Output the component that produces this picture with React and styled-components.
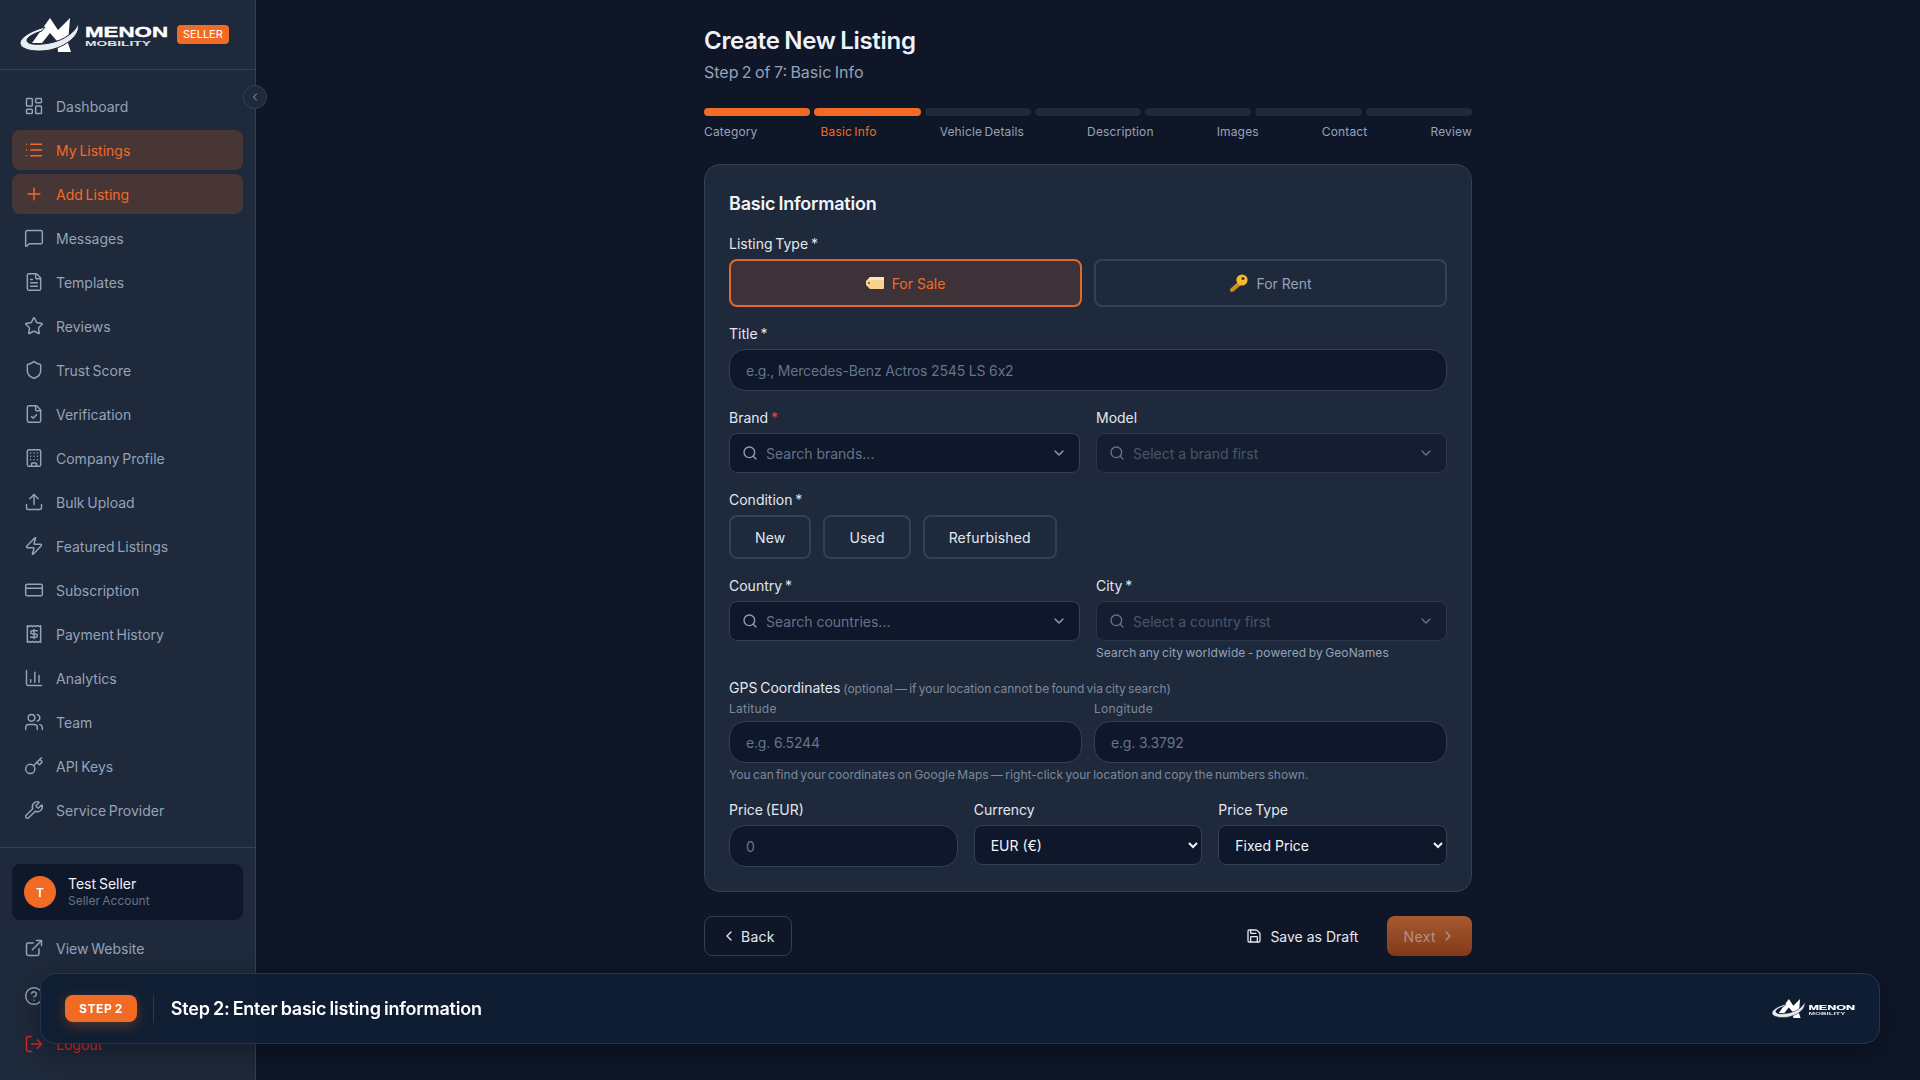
import styled, { createGlobalStyle } from 'styled-components';
import {
  LayoutDashboard, List, Plus, MessageSquare, FileText, Star, Shield, FileCheck, Building,
  Upload, Zap, CreditCard, Receipt, ChartColumn, Users, Key, Wrench, ExternalLink, CircleHelp,
  LogOut, Search, ChevronDown, ChevronLeft, ChevronRight, Save,
} from 'lucide-react';

const ACCENT = '#f26b25';

const NAV_ITEMS = [
  { label: 'Dashboard', icon: LayoutDashboard },
  { label: 'My Listings', icon: List, active: true },
  { label: 'Add Listing', icon: Plus, active: true },
  { label: 'Messages', icon: MessageSquare },
  { label: 'Templates', icon: FileText },
  { label: 'Reviews', icon: Star },
  { label: 'Trust Score', icon: Shield },
  { label: 'Verification', icon: FileCheck },
  { label: 'Company Profile', icon: Building },
  { label: 'Bulk Upload', icon: Upload },
  { label: 'Featured Listings', icon: Zap },
  { label: 'Subscription', icon: CreditCard },
  { label: 'Payment History', icon: Receipt },
  { label: 'Analytics', icon: ChartColumn },
  { label: 'Team', icon: Users },
  { label: 'API Keys', icon: Key },
  { label: 'Service Provider', icon: Wrench },
];

const STEPS = ['Category', 'Basic Info', 'Vehicle Details', 'Description', 'Images', 'Contact', 'Review'];

const GlobalStyle = createGlobalStyle`
  * { box-sizing: border-box; }
  html, body { margin: 0; height: 100%; }
  body {
    background: #0e1628;
    color: #f1f5f9;
    font-family: Inter, "Noto Sans", sans-serif;
    font-size: 14px;
    word-spacing: -0.08em;
    overflow: hidden;
  }
  input::placeholder { color: #64748b; opacity: 1; }
`;

const Logo = ({ width, cut }) => (
  <LogoSvg viewBox="0 0 148 34" width={width} height={(width * 34) / 148}>
    <path d="M12 25 30 0l8 12L50 0l-2 25 3 9H38l-1-11-7-8-8 10Z" fill="#fff" />
    <path
      d="M58 6c3 8-7 21-28 26C13 35 0 31 0 25c0-5 10-12 25-16l-3 4C12 16 6 20 7 23c1 4 12 4 23 2C45 22 55 14 58 6Z"
      fill="#e8edf2"
      stroke={cut}
      strokeWidth="1"
    />
    <text x="65" y="19" fontSize="14" fontWeight="700" fill="#fff" stroke="#fff" strokeWidth="0.35" textLength="83" lengthAdjust="spacingAndGlyphs">
      MENON
    </text>
    <text x="65" y="28" fontSize="7.5" fontWeight="700" fill="#dbe2ea" textLength="66" lengthAdjust="spacingAndGlyphs">
      MOBILITY
    </text>
  </LogoSvg>
);

const TagEmoji = () => (
  <svg width="18" height="12" viewBox="0 0 18 12">
    <path d="M4 0h13a1 1 0 0 1 1 1v10a1 1 0 0 1-1 1H4L0 8V4Z" fill="#fbd38d" />
    <path d="M4 0h13a1 1 0 0 1 1 1v2H2Z" fill="#fde6bd" />
    <circle cx="3" cy="6" r="1" fill="#5b4a3a" />
  </svg>
);

const KeyEmoji = () => (
  <svg width="19" height="19" viewBox="0 0 19 19">
    <path d="M10 7 1 15l.5 3 3-.5L13 10Z" fill="#c9901c" />
    <circle cx="13" cy="6" r="5.6" fill="#f2b92c" />
    <circle cx="14" cy="4.6" r="1.5" fill="#3b3320" />
  </svg>
);

const Combo = ({ placeholder, disabled }) => (
  <ComboBox $disabled={disabled}>
    <Search size={16} color="#94a3b8" />
    <ComboInput placeholder={placeholder} disabled={disabled} />
    <ChevronDown size={16} color="#94a3b8" />
  </ComboBox>
);

export default function App() {
  return (
    <Page>
      <GlobalStyle />
      <Sidebar>
        <SideHeader>
          <Logo width={148} cut="#1e293b" />
          <SellerBadge>SELLER</SellerBadge>
        </SideHeader>
        <CollapseBtn>
          <ChevronLeft size={12} />
        </CollapseBtn>
        <Nav>
          {NAV_ITEMS.map(({ label, icon: Icon, active }) => (
            <NavItem key={label} $active={active}>
              <Icon size={20} strokeWidth={1.75} />
              {label}
            </NavItem>
          ))}
        </Nav>
        <SideFooter>
          <UserCard>
            <Avatar>T</Avatar>
            <div>
              <UserName>Test Seller</UserName>
              <UserRole>Seller Account</UserRole>
            </div>
          </UserCard>
          <NavItem>
            <ExternalLink size={20} strokeWidth={1.75} />
            View Website
          </NavItem>
          <NavItem>
            <CircleHelp size={20} strokeWidth={1.75} />
            Report Issue
          </NavItem>
          <NavItem $danger>
            <LogOut size={20} strokeWidth={1.75} />
            Logout
          </NavItem>
        </SideFooter>
      </Sidebar>

      <Main>
        <Content>
          <Title>Create New Listing</Title>
          <Subtitle>Step 2 of 7: Basic Info</Subtitle>

          <Bars>
            {STEPS.map((step, i) => (
              <Bar key={step} $done={i < 2} />
            ))}
          </Bars>
          <StepLabels>
            {STEPS.map((step, i) => (
              <StepLabel key={step} $current={i === 1}>
                {step}
              </StepLabel>
            ))}
          </StepLabels>

          <Card>
            <CardTitle>Basic Information</CardTitle>
            <Form>
              <div>
                <Label>Listing Type *</Label>
                <TwoCols $gap={12}>
                  <TypeBtn $active>
                    <TagEmoji />
                    For Sale
                  </TypeBtn>
                  <TypeBtn>
                    <KeyEmoji />
                    For Rent
                  </TypeBtn>
                </TwoCols>
              </div>

              <div>
                <Label>Title *</Label>
                <Input placeholder="e.g., Mercedes-Benz Actros 2545 LS 6x2" />
              </div>

              <TwoCols $gap={16}>
                <div>
                  <Label>
                    Brand <Req>*</Req>
                  </Label>
                  <Combo placeholder="Search brands..." />
                </div>
                <div>
                  <Label>Model</Label>
                  <Combo placeholder="Select a brand first" disabled />
                </div>
              </TwoCols>

              <div>
                <Label>Condition *</Label>
                <ConditionRow>
                  <ConditionBtn>New</ConditionBtn>
                  <ConditionBtn>Used</ConditionBtn>
                  <ConditionBtn>Refurbished</ConditionBtn>
                </ConditionRow>
              </div>

              <TwoCols $gap={16}>
                <div>
                  <Label>Country *</Label>
                  <Combo placeholder="Search countries..." />
                </div>
                <div>
                  <Label>City *</Label>
                  <Combo placeholder="Select a country first" disabled />
                  <Help>Search any city worldwide - powered by GeoNames</Help>
                </div>
              </TwoCols>

              <div>
                <GpsLabel>
                  GPS Coordinates <small>(optional — if your location cannot be found via city search)</small>
                </GpsLabel>
                <TwoCols $gap={12}>
                  <div>
                    <SubLabel>Latitude</SubLabel>
                    <Input placeholder="e.g. 6.5244" />
                  </div>
                  <div>
                    <SubLabel>Longitude</SubLabel>
                    <Input placeholder="e.g. 3.3792" />
                  </div>
                </TwoCols>
                <Help $dim>You can find your coordinates on Google Maps — right-click your location and copy the numbers shown.</Help>
              </div>

              <ThreeCols>
                <div>
                  <Label>Price (EUR)</Label>
                  <Input placeholder="0" />
                </div>
                <div>
                  <Label>Currency</Label>
                  <Select defaultValue="EUR">
                    <option value="EUR">EUR (€)</option>
                    <option value="USD">USD ($)</option>
                  </Select>
                </div>
                <div>
                  <Label>Price Type</Label>
                  <Select defaultValue="fixed">
                    <option value="fixed">Fixed Price</option>
                    <option value="negotiable">Negotiable</option>
                  </Select>
                </div>
              </ThreeCols>
            </Form>
          </Card>

          <Actions>
            <BackBtn>
              <ChevronLeft size={16} />
              Back
            </BackBtn>
            <ActionsRight>
              <DraftBtn>
                <Save size={16} />
                Save as Draft
              </DraftBtn>
              <NextBtn>
                Next
                <ChevronRight size={16} />
              </NextBtn>
            </ActionsRight>
          </Actions>
        </Content>
      </Main>

      <Toast>
        <StepBadge>STEP 2</StepBadge>
        <ToastDivider />
        <ToastText>Step 2: Enter basic listing information</ToastText>
        <Logo width={83} cut="#0f1f33" />
      </Toast>
    </Page>
  );
}

const Page = styled.div`
  display: flex;
  height: 100vh;
`;

const LogoSvg = styled.svg`
  flex-shrink: 0;
  font-family: "Liberation Sans", Arial, sans-serif;
  word-spacing: 0;
`;

const Sidebar = styled.aside`
  position: relative;
  display: flex;
  flex-direction: column;
  width: 256px;
  flex-shrink: 0;
  background: #1e293b;
  border-right: 1px solid #334155;
`;

const SideHeader = styled.div`
  display: flex;
  align-items: center;
  gap: 9px;
  height: 70px;
  padding: 0 20px;
  border-bottom: 1px solid #334155;
`;

const SellerBadge = styled.span`
  padding: 2px 6px;
  border-radius: 4px;
  background: ${ACCENT};
  color: #fff;
  font-size: 11px;
  font-weight: 400;
  line-height: 15px;
`;

const CollapseBtn = styled.button`
  position: absolute;
  top: 85px;
  right: -12px;
  display: flex;
  align-items: center;
  justify-content: center;
  width: 24px;
  height: 24px;
  padding: 0;
  border: 1px solid #334155;
  border-radius: 50%;
  background: #1e293b;
  color: #94a3b8;
`;

const Nav = styled.nav`
  display: flex;
  flex-direction: column;
  gap: 4px;
  padding: 16px 12px 17px;
  border-bottom: 1px solid #334155;
`;

const NavItem = styled.a`
  display: flex;
  align-items: center;
  gap: 12px;
  height: 40px;
  padding: 0 12px;
  border-radius: 8px;
  background: ${props => (props.$active ? 'rgba(242, 107, 37, 0.2)' : 'transparent')};
  color: ${props => (props.$active ? ACCENT : props.$danger ? '#dc2626' : '#94a3b8')};
  font-size: 14px;
  font-weight: 400;
`;

const SideFooter = styled.div`
  display: flex;
  flex-direction: column;
  gap: 8px;
  padding: 16px 12px;
`;

const UserCard = styled.div`
  display: flex;
  align-items: center;
  gap: 12px;
  height: 56px;
  padding: 0 12px;
  border-radius: 8px;
  background: #0f172a;
`;

const Avatar = styled.div`
  display: flex;
  align-items: center;
  justify-content: center;
  width: 32px;
  height: 32px;
  border-radius: 50%;
  background: ${ACCENT};
  color: #fff;
  font-size: 12px;
  font-weight: 600;
`;

const UserName = styled.div`
  color: #f1f5f9;
  font-size: 14px;
  font-weight: 400;
  line-height: 18px;
`;

const UserRole = styled.div`
  color: #64748b;
  font-size: 12px;
  line-height: 16px;
`;

const Main = styled.main`
  flex: 1;
  padding-top: 24px;
`;

const Content = styled.div`
  width: 768px;
  margin: 0 auto;
`;

const Title = styled.h1`
  margin: 0 0 2px;
  color: #eef2f8;
  font-size: 24px;
  font-weight: 600;
  letter-spacing: -0.012em;
  line-height: 34px;
`;

const Subtitle = styled.p`
  margin: 0 0 24px;
  color: #94a3b8;
  font-size: 16px;
  line-height: 24px;
`;

const Bars = styled.div`
  display: flex;
  gap: 4px;
`;

const Bar = styled.div`
  flex: 1;
  height: 8px;
  border-radius: 4px;
  background: ${props => (props.$done ? ACCENT : '#1e293b')};
`;

const StepLabels = styled.div`
  display: flex;
  justify-content: space-between;
  margin: 8px 0 24px;
`;

const StepLabel = styled.span`
  color: ${props => (props.$current ? ACCENT : '#94a3b8')};
  font-size: 12px;
  letter-spacing: 0.012em;
  line-height: 16px;
`;

const Card = styled.section`
  padding: 24px;
  border: 1px solid #334155;
  border-radius: 16px;
  background: #1e293b;
`;

const CardTitle = styled.h2`
  margin: 0 0 14px;
  color: #f1f5f9;
  font-size: 18px;
  font-weight: 600;
  letter-spacing: -0.012em;
  line-height: 30px;
`;

const Form = styled.div`
  display: flex;
  flex-direction: column;
  gap: 16px;
`;

const TwoCols = styled.div`
  display: grid;
  grid-template-columns: 1fr 1fr;
  gap: ${props => props.$gap}px;
`;

const ThreeCols = styled.div`
  display: grid;
  grid-template-columns: repeat(3, 1fr);
  gap: 16px;
`;

const Label = styled.div`
  margin-bottom: 4px;
  color: #e2e8f0;
  font-size: 14px;
  font-weight: 400;
  line-height: 22px;
`;

const Req = styled.span`
  color: #ef4444;
`;

const GpsLabel = styled(Label)`
  margin-bottom: 1px;

  small {
    color: #7c899c;
    font-size: 12px;
    font-weight: 400;
  }
`;

const SubLabel = styled.div`
  margin-bottom: 4px;
  color: #7c899c;
  font-size: 12px;
  letter-spacing: 0.02em;
  line-height: 16px;
`;

const Help = styled.div`
  margin-top: 4px;
  color: ${props => (props.$dim ? '#7c899c' : '#94a3b8')};
  font-size: 12px;
  letter-spacing: ${props => (props.$dim ? '0.003em' : '0.01em')};
  line-height: 16px;
`;

const TypeBtn = styled.button`
  display: flex;
  align-items: center;
  justify-content: center;
  gap: 8px;
  height: 48px;
  border: 2px solid ${props => (props.$active ? '#e0692e' : '#334155')};
  border-radius: 8px;
  background: ${props => (props.$active ? 'rgba(242, 107, 37, 0.15)' : 'transparent')};
  color: ${props => (props.$active ? ACCENT : '#94a3b8')};
  font: inherit;
  font-weight: 400;
`;

const Input = styled.input`
  display: block;
  width: 100%;
  height: 42px;
  padding: 0 16px;
  border: 1px solid #334155;
  border-radius: 16px;
  outline: none;
  background: #0f172a;
  color: #f1f5f9;
  font: inherit;
  letter-spacing: -0.012em;
`;

const ComboBox = styled.div`
  display: flex;
  align-items: center;
  gap: 8px;
  height: 40px;
  padding: 0 12px;
  border: 1px solid #334155;
  border-radius: 8px;
  background: #0f172a;
  opacity: ${props => (props.$disabled ? 0.6 : 1)};
`;

const ComboInput = styled.input`
  flex: 1;
  min-width: 0;
  border: 0;
  outline: none;
  padding: 0;
  background: transparent;
  color: #f1f5f9;
  font: inherit;
`;

const ConditionRow = styled.div`
  display: flex;
  gap: 12px;
`;

const ConditionBtn = styled.button`
  height: 44px;
  padding: 0 24px;
  border: 2px solid #334155;
  border-radius: 8px;
  background: transparent;
  color: #e2e8f0;
  font: inherit;
  font-weight: 400;
  letter-spacing: 0.012em;
`;

const Select = styled.select`
  display: block;
  width: 100%;
  height: 40px;
  padding: 0 12px;
  border: 1px solid #334155;
  border-radius: 8px;
  outline: none;
  background: #0f172a;
  color: #f1f5f9;
  font: inherit;
`;

const Actions = styled.div`
  display: flex;
  justify-content: space-between;
  margin-top: 24px;
`;

const ActionsRight = styled.div`
  display: flex;
  align-items: center;
  gap: 12px;
`;

const BackBtn = styled.button`
  display: flex;
  align-items: center;
  gap: 4px;
  height: 40px;
  padding: 0 16px;
  border: 1px solid #334155;
  border-radius: 8px;
  background: transparent;
  color: #e2e8f0;
  font: inherit;
  font-weight: 400;
  letter-spacing: 0.02em;
`;

const DraftBtn = styled(BackBtn)`
  gap: 8px;
  border-color: transparent;
  letter-spacing: 0;
`;

const NextBtn = styled.button`
  display: flex;
  align-items: center;
  gap: 4px;
  height: 40px;
  padding: 0 16px;
  border: 0;
  border-radius: 8px;
  background: linear-gradient(#a65a2e, #83391b);
  color: #ad9486;
  font: inherit;
  font-weight: 400;
  letter-spacing: 0.03em;
`;

const Toast = styled.div`
  position: fixed;
  left: 40px;
  right: 40px;
  bottom: 36px;
  display: flex;
  align-items: center;
  height: 71px;
  padding: 0 24px;
  border: 1px solid #26364a;
  border-radius: 16px;
  background: rgba(14, 30, 50, 0.97);
  box-shadow: 0 10px 30px rgba(0, 0, 0, 0.3);
`;

const StepBadge = styled.span`
  padding: 6px 14px;
  border-radius: 8px;
  background: ${ACCENT};
  box-shadow: 0 4px 14px rgba(242, 107, 37, 0.3);
  color: #fff;
  font-size: 12px;
  font-weight: 700;
  letter-spacing: 0.05em;
  line-height: 15px;
`;

const ToastDivider = styled.span`
  width: 1px;
  height: 28px;
  margin: 0 17px 0 16px;
  background: #2a3a4f;
`;

const ToastText = styled.span`
  flex: 1;
  color: #fff;
  font-size: 18px;
  font-weight: 600;
  letter-spacing: -0.012em;
`;
